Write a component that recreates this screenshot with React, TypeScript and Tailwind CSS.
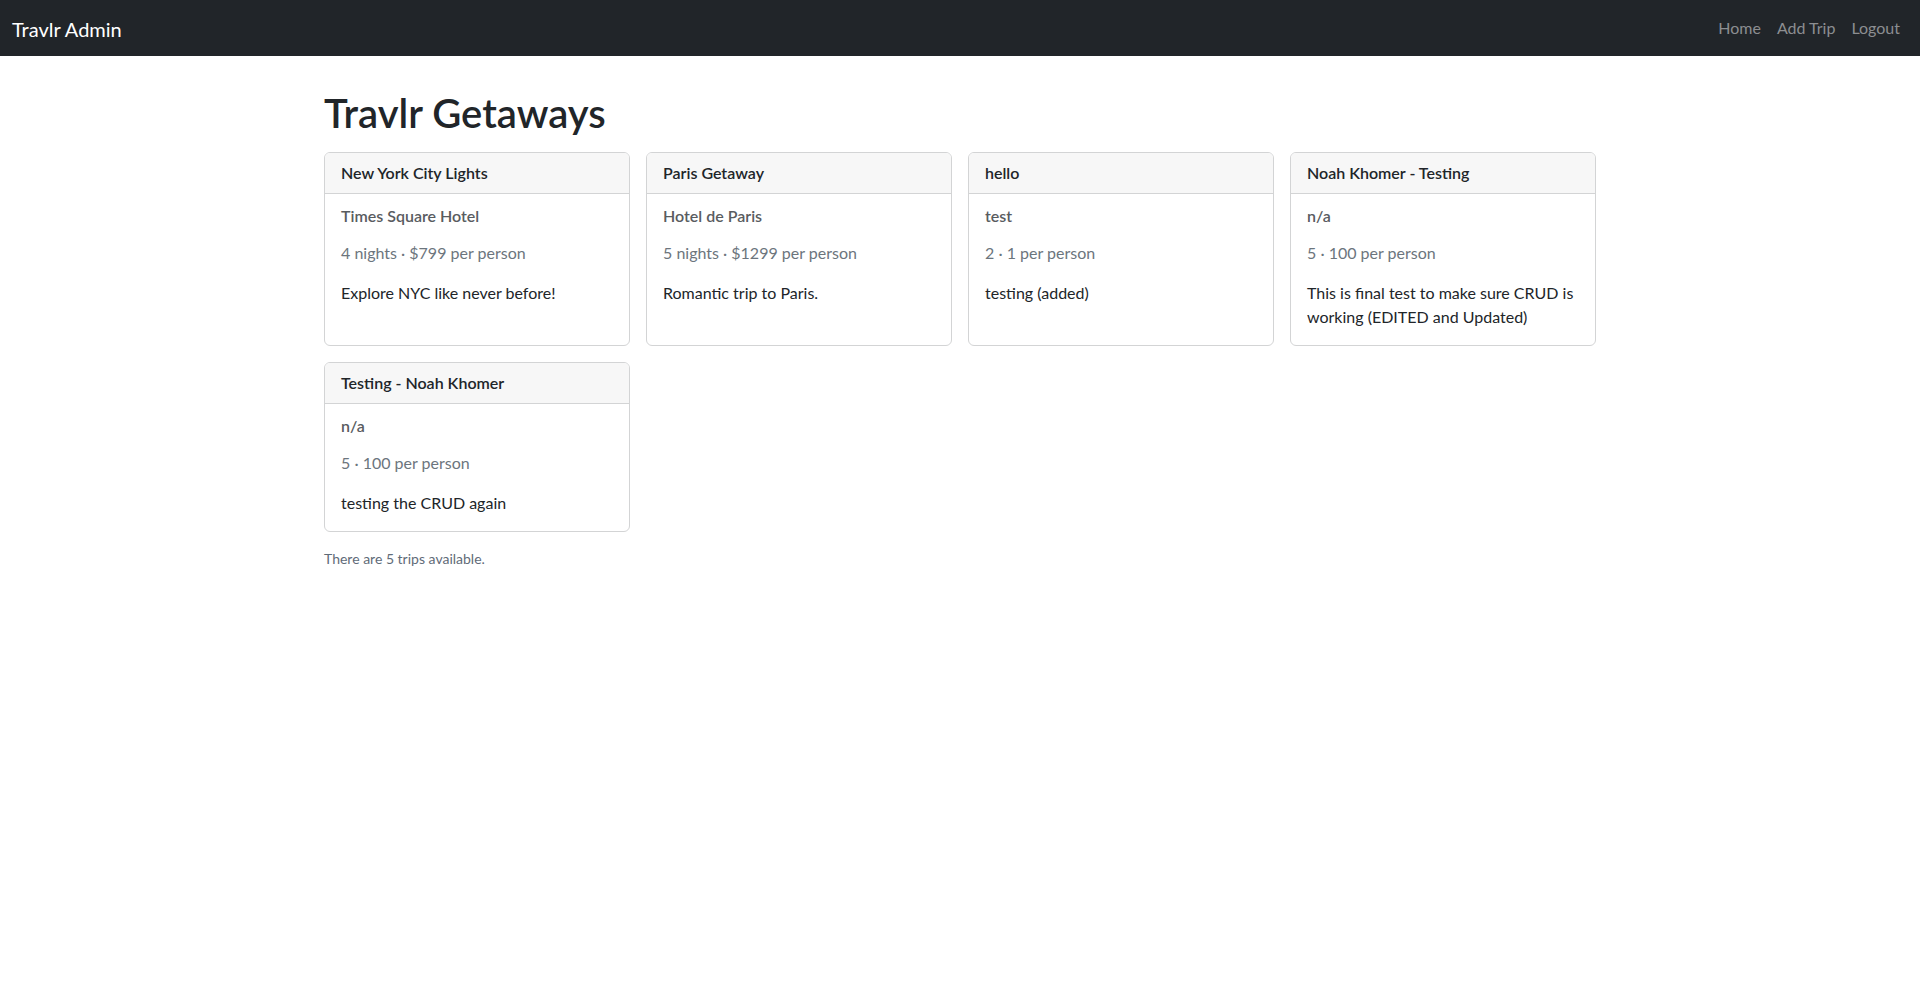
const trips = [
  {
    name: 'New York City Lights',
    resort: 'Times Square Hotel',
    meta: '4 nights · $799 per person',
    description: 'Explore NYC like never before!',
  },
  {
    name: 'Paris Getaway',
    resort: 'Hotel de Paris',
    meta: '5 nights · $1299 per person',
    description: 'Romantic trip to Paris.',
  },
  {
    name: 'hello',
    resort: 'test',
    meta: '2 · 1 per person',
    description: 'testing (added)',
  },
  {
    name: 'Noah Khomer - Testing',
    resort: 'n/a',
    meta: '5 · 100 per person',
    description: 'This is final test to make sure CRUD is working (EDITED and Updated)',
  },
  {
    name: 'Testing - Noah Khomer',
    resort: 'n/a',
    meta: '5 · 100 per person',
    description: 'testing the CRUD again',
  },
];

function TripCard({ trip }) {
  return (
    <div className="flex flex-col rounded-[6px] border border-[#d3d4d5] bg-white">
      <div className="h-[41px] rounded-t-[5px] border-b border-[#d3d4d5] bg-[#f7f7f7] px-4 pt-[8px] text-[16px] leading-[24px] font-semibold text-[#212529]">
        {trip.name}
      </div>
      <div className="flex-1 p-4">
        <h6 className="-mt-[4px] mb-4 text-[16px] leading-[19px] font-semibold text-[#595c5f]">{trip.resort}</h6>
        <p className="mb-4 text-[16px] leading-[24px] text-[#6c757d]">{trip.meta}</p>
        <p className="text-[16px] leading-[24px] text-[#212529]">{trip.description}</p>
      </div>
    </div>
  );
}

export default function App() {
  return (
    <div className="min-h-screen bg-white font-['Segoe_UI','Lato',sans-serif] text-[#212529]">
      <nav className="flex h-[56px] items-center justify-between bg-[#212529] px-3">
        <a href="#" className="pt-[1px] text-[20px] leading-[30px] text-white">Travlr Admin</a>
        <div className="flex items-center">
          <a href="#" className="px-2 text-[16px] leading-[24px] text-[#8c8e91]">Home</a>
          <a href="#" className="px-2 text-[16px] leading-[24px] text-[#8c8e91]">Add Trip</a>
          <a href="#" className="px-2 text-[16px] leading-[24px] text-[#8c8e91]">Logout</a>
        </div>
      </nav>

      <main className="mx-auto w-[1272px] pt-[33px]">
        <h1 className="mb-[15px] text-[40px] leading-[48px] font-semibold text-[#212529]">Travlr Getaways</h1>
        <div className="grid grid-cols-4 gap-4">
          {trips.map((t) => (
            <TripCard key={t.name} trip={t} />
          ))}
        </div>
        <p className="mt-[16px] text-[14px] leading-[21px] text-[#5f6b78]">There are {trips.length} trips available.</p>
      </main>
    </div>
  );
}
